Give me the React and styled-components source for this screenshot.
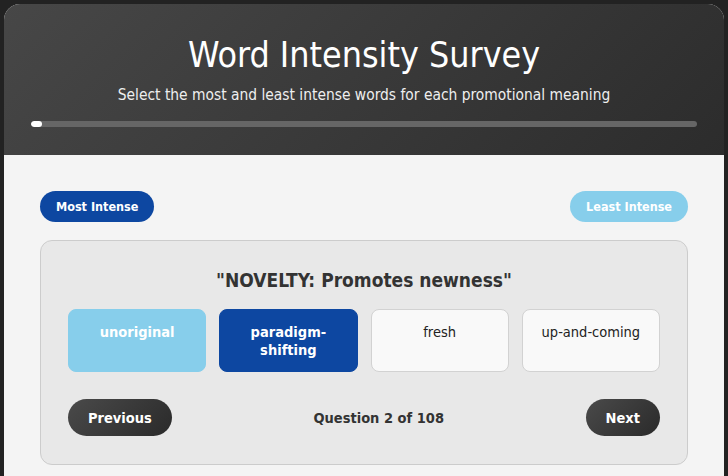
import React, { useState } from "react";
import styled, { createGlobalStyle } from "styled-components";

const GlobalStyle = createGlobalStyle`
  * { box-sizing: border-box; }
  body {
    margin: 0;
    background: #222222;
    font-family: "DejaVu Sans Condensed", "DejaVu Sans", sans-serif;
  }
`;

const Page = styled.div`
  padding: 4px 4px 0 4px;
`;

const Container = styled.div`
  border-radius: 16px 16px 0 0;
  overflow: hidden;
  background: #f4f4f4;
`;

const Header = styled.header`
  background: linear-gradient(135deg, #474747 0%, #2c2c2c 100%);
  color: white;
  text-align: center;
  padding: 29px 27px 28px;
`;

const Title = styled.h1`
  margin: 0;
  font-size: 35.5px;
  font-weight: normal;
  line-height: 44px;
`;

const Subtitle = styled.p`
  margin: 8px 0 0;
  font-size: 15.4px;
  line-height: 20px;
  color: #eeeeee;
`;

const Track = styled.div`
  margin-top: 16px;
  height: 6px;
  border-radius: 3px;
  background: #666666;
  overflow: hidden;
`;

const Fill = styled.div`
  height: 100%;
  background: white;
  border-radius: 3px;
`;

const Body = styled.main`
  padding: 36px 36px 12px;
`;

const Legend = styled.div`
  display: flex;
  justify-content: space-between;
  margin-bottom: 18px;
`;

const Pill = styled.span`
  display: inline-flex;
  align-items: center;
  height: 31px;
  padding: 0 16px;
  border-radius: 16px;
  background: ${(p) => p.$bg};
  color: white;
  font-weight: bold;
  font-size: 12.5px;
`;

const Card = styled.section`
  background: #e8e8e8;
  border: 1px solid #cccccc;
  border-radius: 12px;
  padding: 26px 27px 28px;
`;

const Question = styled.h2`
  margin: 0 0 16px;
  text-align: center;
  font-size: 19px;
  line-height: 26px;
  color: #333333;
`;

const Options = styled.div`
  display: grid;
  grid-template-columns: repeat(4, 1fr);
  gap: 13px;
`;

const Option = styled.button`
  height: 63px;
  padding: 13px 8px;
  border-radius: 8px;
  font-family: inherit;
  font-size: 14.5px;
  line-height: 18px;
  display: flex;
  justify-content: center;
  align-items: flex-start;
  text-align: center;
  cursor: pointer;
  border: 1px solid
    ${(p) => (p.$state === "most" ? "#0d47a1" : p.$state === "least" ? "#87ceeb" : "#d2d2d2")};
  background: ${(p) =>
    p.$state === "most" ? "#0d47a1" : p.$state === "least" ? "#87ceeb" : "#f9f9f9"};
  color: ${(p) => (p.$state ? "white" : "#222222")};
  font-weight: ${(p) => (p.$state ? "bold" : "normal")};
`;

const Nav = styled.div`
  display: flex;
  align-items: center;
  justify-content: space-between;
  margin-top: 27px;
`;

const NavButton = styled.button`
  height: 37px;
  padding: 0 20px;
  border: none;
  border-radius: 19px;
  background: linear-gradient(135deg, #4a4a4a 0%, #2a2a2a 100%);
  color: white;
  font-family: inherit;
  font-weight: bold;
  font-size: 14.5px;
  cursor: pointer;
`;

const Counter = styled.span`
  font-weight: bold;
  font-size: 14.5px;
  color: #333333;
`;

const words = ["unoriginal", "paradigm-shifting", "fresh", "up-and-coming"];

export default function App() {
  const [most] = useState("paradigm-shifting");
  const [least] = useState("unoriginal");
  const current = 2;
  const total = 108;

  const stateOf = (w) => (w === most ? "most" : w === least ? "least" : null);

  return (
    <Page>
      <GlobalStyle />
      <Container>
        <Header>
          <Title>Word Intensity Survey</Title>
          <Subtitle>Select the most and least intense words for each promotional meaning</Subtitle>
          <Track>
            <Fill style={{ width: `${(current - 1) / total * 100 + 0.8}%` }} />
          </Track>
        </Header>
        <Body>
          <Legend>
            <Pill $bg="#0d47a1">Most Intense</Pill>
            <Pill $bg="#87ceeb">Least Intense</Pill>
          </Legend>
          <Card>
            <Question>"NOVELTY: Promotes newness"</Question>
            <Options>
              {words.map((w) => (
                <Option key={w} $state={stateOf(w)}>
                  {w}
                </Option>
              ))}
            </Options>
            <Nav>
              <NavButton>Previous</NavButton>
              <Counter>
                Question {current} of {total}
              </Counter>
              <NavButton>Next</NavButton>
            </Nav>
          </Card>
        </Body>
      </Container>
    </Page>
  );
}
